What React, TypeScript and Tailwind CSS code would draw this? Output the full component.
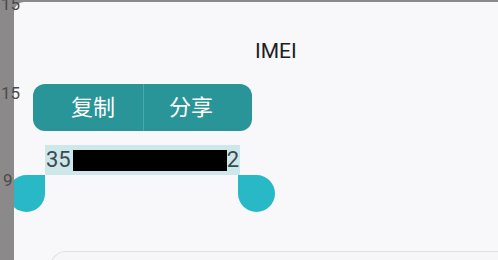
export default function App() {
  return (
    <div
      className="relative flex h-[260px] w-[498px] overflow-hidden bg-[#8b898a]"
      style={{ fontFamily: 'Roboto, "Noto Sans CJK SC", sans-serif' }}
    >
      {/* background list peeking out on the left */}
      <div className="relative w-[14px] shrink-0 text-[17px] leading-none text-[#4d4b4c]">
        <span className="absolute left-[1px] top-[-4px]">15</span>
        <span className="absolute left-[1px] top-[85px]">15</span>
        <span className="absolute left-[3px] top-[172px]">9</span>
      </div>

      <div className="mt-[2px] flex flex-1 flex-col overflow-hidden rounded-tl-[10px] bg-[#f8f7fa]">
        <h1 className="mt-[36px] shrink-0 pl-[241px] text-[21px] leading-[26px] text-[#202020]">IMEI</h1>

        {/* selection toolbar */}
        <div className="ml-[19px] mt-[20px] flex h-[47px] w-[219px] shrink-0 items-center rounded-[12px] bg-[#2a9598] text-[22px] text-white">
          <button className="flex h-full w-[110px] items-center justify-center pl-[10px]">复制</button>
          <div className="h-full w-px bg-[#4aa9ab]" />
          <button className="flex h-full flex-1 items-center justify-center pr-[14px]">分享</button>
        </div>

        {/* selected text */}
        <div className="relative ml-[31px] mt-[14px] flex h-[30px] w-[195px] shrink-0 items-center bg-[#cde7ea] text-[22px] leading-none text-[#3b4a50]">
          <span className="pl-[1px]">35</span>
          <span className="ml-[2px] h-[21px] w-[154px] bg-black" />
          <span>2</span>
          <span className="absolute left-[-37px] top-[30px] h-[37px] w-[37px] rounded-full rounded-tr-none bg-[#29b9c6]" />
          <span className="absolute left-[193px] top-[30px] h-[37px] w-[37px] rounded-full rounded-tl-none bg-[#29b9c6]" />
        </div>

        <div className="ml-[36px] mt-[76px] h-[20px] shrink-0 rounded-tl-[16px] border-l border-t border-[#e1e0e4] bg-[#f6f5f8]" />
      </div>
    </div>
  );
}
